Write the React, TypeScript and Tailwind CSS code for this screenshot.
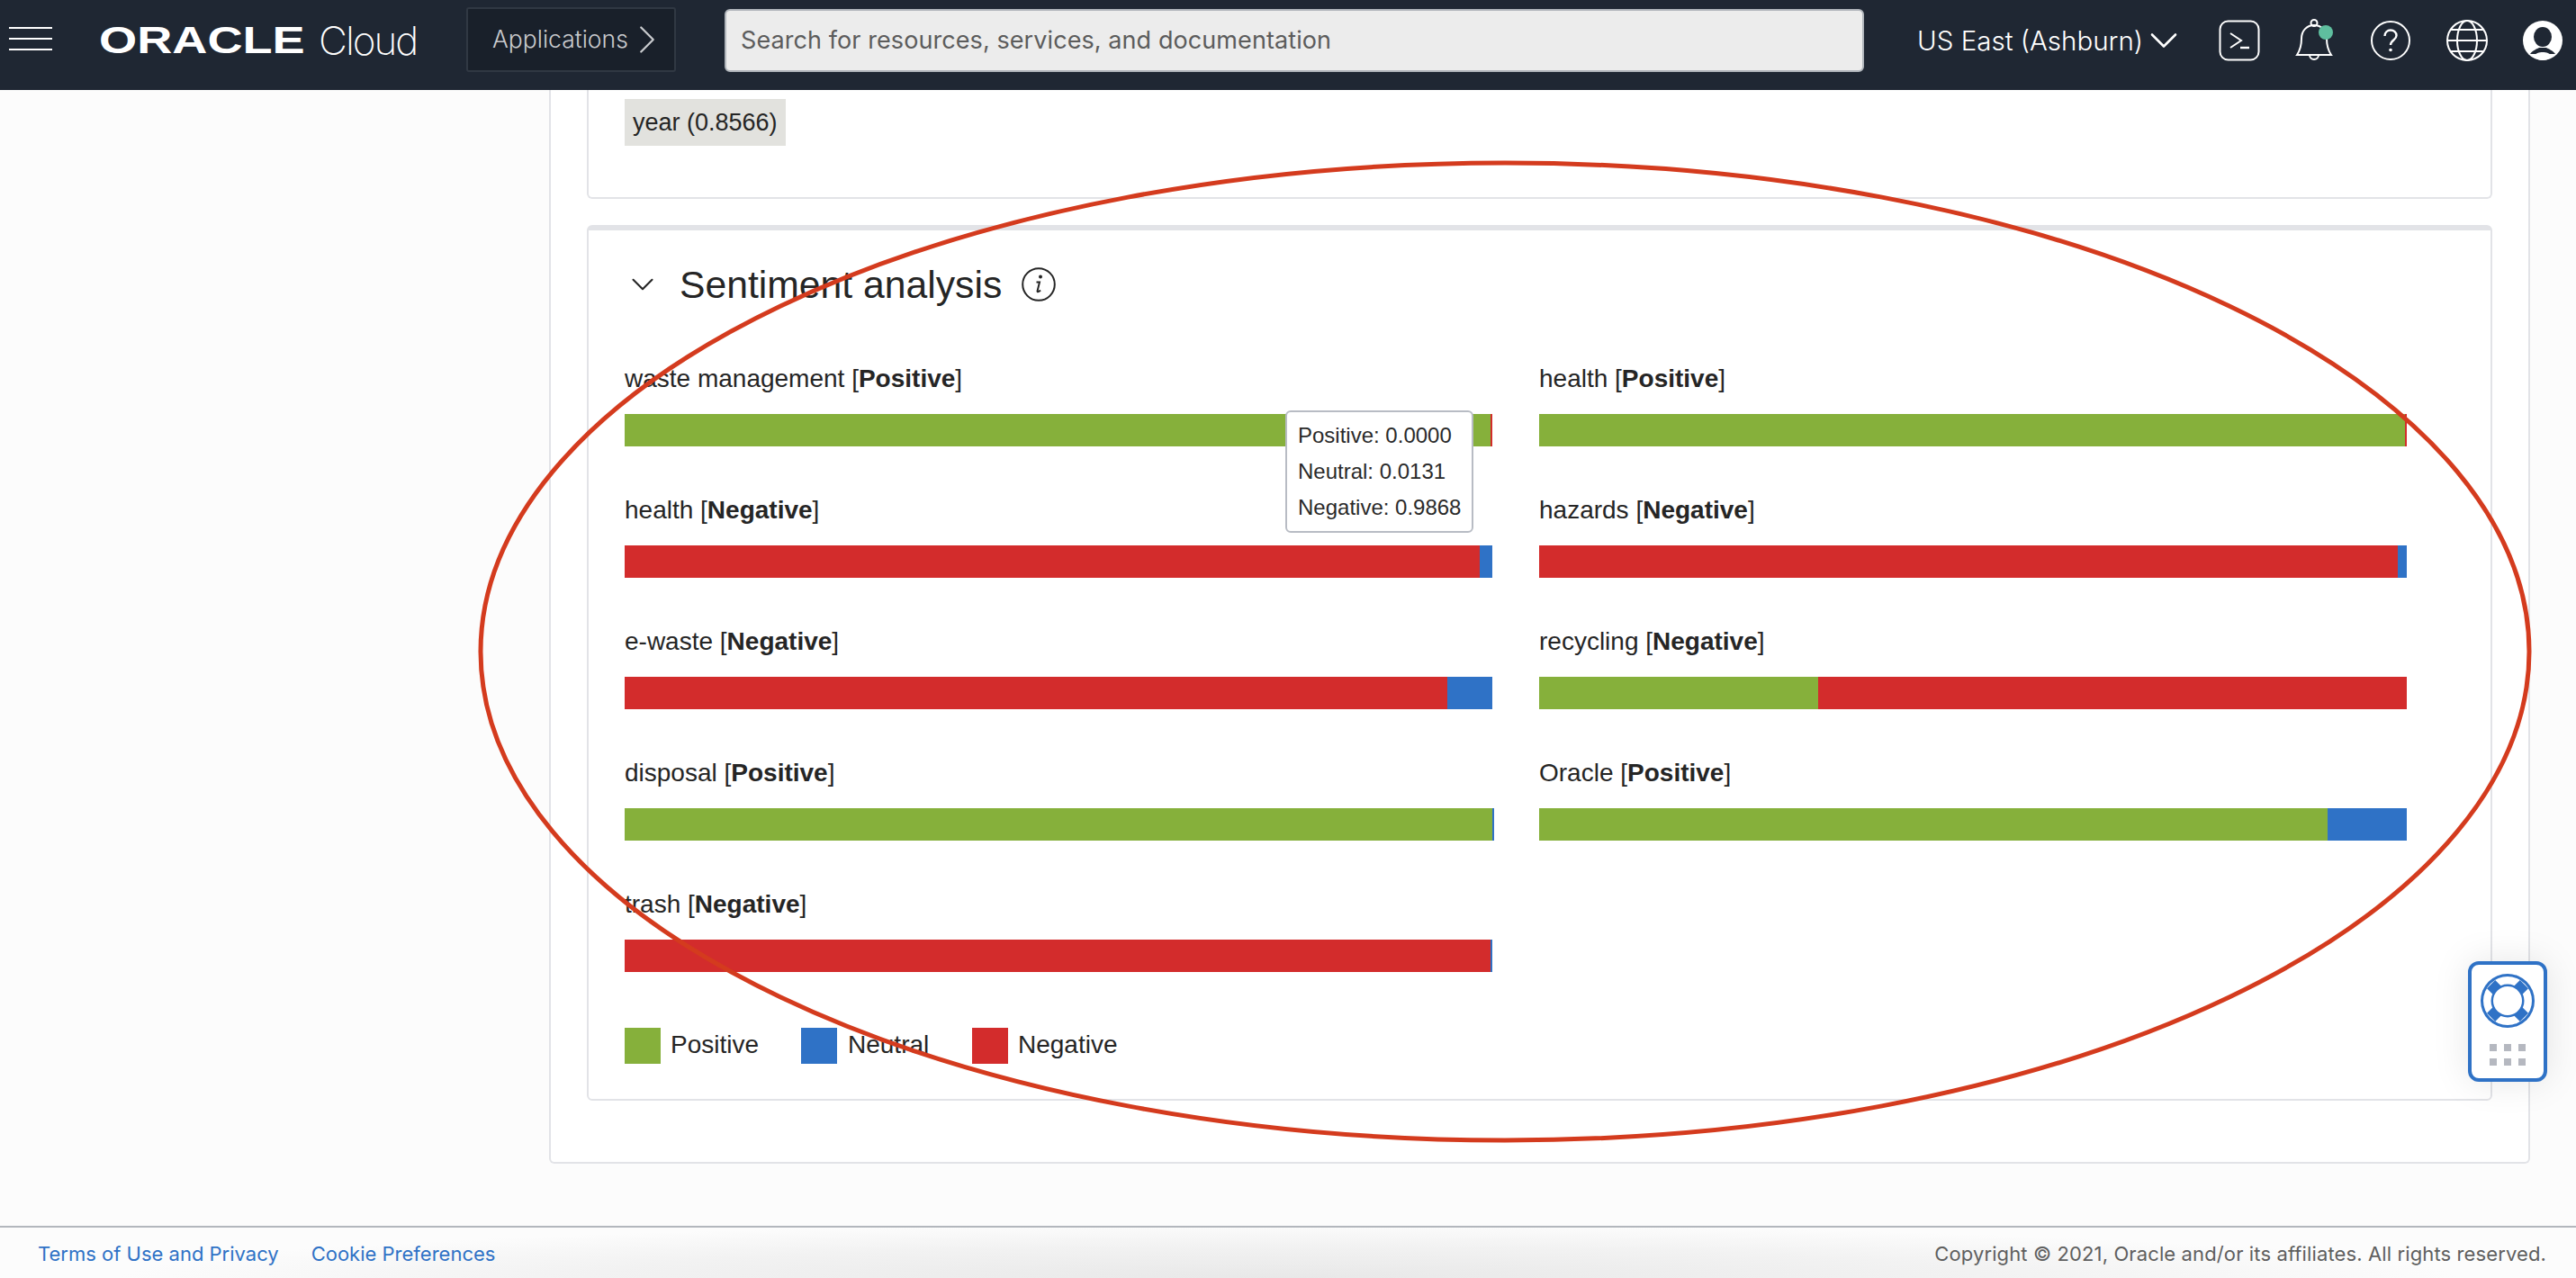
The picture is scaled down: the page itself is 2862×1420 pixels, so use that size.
import React from 'react';
import { ChevronDown, ChevronRight } from 'lucide-react';

const GREEN = '#86b03b';
const BLUE = '#2f72c6';
const RED = '#d32c2c';

type Seg = { color: string; width: number };
type Row = { term: string; label: string; segs: Seg[] };

const leftRows: Row[] = [
  { term: 'waste management', label: 'Positive', segs: [{ color: GREEN, width: 962 }, { color: RED, width: 2 }] },
  { term: 'health', label: 'Negative', segs: [{ color: RED, width: 950 }, { color: BLUE, width: 14 }] },
  { term: 'e-waste', label: 'Negative', segs: [{ color: RED, width: 914 }, { color: BLUE, width: 50 }] },
  { term: 'disposal', label: 'Positive', segs: [{ color: GREEN, width: 964 }, { color: BLUE, width: 2 }] },
  { term: 'trash', label: 'Negative', segs: [{ color: RED, width: 962 }, { color: BLUE, width: 2 }] },
];

const rightRows: Row[] = [
  { term: 'health', label: 'Positive', segs: [{ color: GREEN, width: 962 }, { color: RED, width: 2 }] },
  { term: 'hazards', label: 'Negative', segs: [{ color: RED, width: 954 }, { color: BLUE, width: 10 }] },
  { term: 'recycling', label: 'Negative', segs: [{ color: GREEN, width: 310 }, { color: RED, width: 654 }] },
  { term: 'Oracle', label: 'Positive', segs: [{ color: GREEN, width: 876 }, { color: BLUE, width: 88 }] },
];

function SentimentRow({ row, tooltip }: { row: Row; tooltip?: boolean }) {
  return (
    <div className="w-[964px]">
      <div className="h-[40px] mb-[19px] text-[28px] leading-[40px] text-[#252525] whitespace-nowrap">
        {row.term} [<b>{row.label}</b>]
      </div>
      <div className="relative flex h-[36px]">
        {row.segs.map((seg, i) => (
          <div key={i} className="h-full shrink-0" style={{ width: seg.width, backgroundColor: seg.color }} />
        ))}
        {tooltip && (
          <div className="absolute left-[734px] top-[-4px] w-[209px] h-[136px] bg-white border-2 border-[#b8bcc4] rounded-[6px] pl-[12px] pt-[6px] text-[24px] leading-[40px] text-[#2a2a2a]">
            <div>Positive: 0.0000</div>
            <div>Neutral: 0.0131</div>
            <div>Negative: 0.9868</div>
          </div>
        )}
      </div>
    </div>
  );
}

function TerminalIcon() {
  return (
    <svg width="46" height="46" viewBox="0 0 46 46" fill="none" stroke="white" className="shrink-0">
      <rect x="1.5" y="1.5" width="43" height="43" rx="9" strokeWidth="2" />
      <path d="M13 15l12 8-12 8" strokeWidth="2" />
      <path d="M24 31h10" strokeWidth="2.4" />
    </svg>
  );
}

function BellIcon() {
  return (
    <svg width="44" height="48" viewBox="0 0 44 48" fill="none" stroke="white" strokeWidth="2" className="shrink-0">
      <circle cx="21" cy="4.5" r="3.5" />
      <path d="M2 40c4-6 5-11 5-18C7 13 13 7 21 7s14 6 14 15c0 7 1 12 5 18z" />
      <path d="M16 40a5 5 0 0 0 10 0" />
      <circle cx="34" cy="15" r="8" fill="#5fbf9f" stroke="none" />
    </svg>
  );
}

function HelpIcon() {
  return (
    <svg width="46" height="46" viewBox="0 0 46 46" fill="none" stroke="white" className="shrink-0">
      <circle cx="23" cy="23" r="21" strokeWidth="2" />
      <path d="M16.500 18c0-4 3-6.500 6.500-6.500s6.500 2.500 6.500 6c0 5-6.500 5-6.500 10.500" strokeWidth="2.400" />
      <circle cx="23" cy="33.500" r="1.800" fill="white" stroke="none" />
    </svg>
  );
}

function GlobeIcon() {
  return (
    <svg width="46" height="46" viewBox="0 0 46 46" fill="none" stroke="white" strokeWidth="2" className="shrink-0">
      <circle cx="23" cy="23" r="22" />
      <ellipse cx="23" cy="23" rx="11" ry="22" />
      <path d="M1 23h44M5 11h36M5 35h36" />
    </svg>
  );
}

function AvatarIcon() {
  return (
    <svg width="44" height="44" viewBox="0 0 44 44" className="shrink-0">
      <circle cx="22" cy="22" r="22" fill="white" />
      <ellipse cx="22" cy="18" rx="10" ry="11" fill="#1f2733" />
      <path d="M8 37c3-4 8-6 10-7h8c2 1 7 3 10 7" fill="#1f2733" />
      <path d="M11 40c3-4 7-5 11-5s8 1 11 5c-3 2-7 4-11 4s-8-2-11-4z" fill="white" />
    </svg>
  );
}

function LifeBuoy() {
  return (
    <svg width="60" height="60" viewBox="0 0 60 60" className="shrink-0">
      <circle cx="30" cy="30" r="30" fill={BLUE} />
      <circle cx="30" cy="30" r="27" fill="white" />
      <path d="M11.600 11.600L48.400 48.400M48.400 11.600L11.600 48.400" stroke={BLUE} strokeWidth="13" />
      <circle cx="30" cy="30" r="18.500" fill={BLUE} />
      <circle cx="30" cy="30" r="16" fill="white" />
    </svg>
  );
}

export default function App() {
  return (
    <div className="relative flex flex-col h-screen overflow-hidden bg-[#fcfcfc] font-['Liberation_Sans',Arial,sans-serif]">
      <header className="flex items-center h-[100px] pb-[10px] shrink-0 bg-[#1f2733] text-white">
        <div className="ml-[10px] mb-[4px] w-[48px] flex flex-col gap-[10px]">
          <div className="h-[2px] bg-white" />
          <div className="h-[2px] bg-white" />
          <div className="h-[2px] bg-white" />
        </div>
        <div className="ml-[52px] w-[232px] text-[42px] leading-none font-bold origin-left scale-x-[1.29] whitespace-nowrap">
          ORACLE
        </div>
        <div className="ml-[12px] w-[108px] text-[44px] leading-none font-['Inter',sans-serif] font-extralight tracking-[-2px]">
          Cloud
        </div>
        <button className="ml-[56px] w-[233px] h-[72px] mb-[2px] flex items-center pl-[27px] bg-[#19202a] border-2 border-[#303843] rounded-[3px] text-[26.500px] text-[#c9cbce] font-['Inter',sans-serif] font-light">
          Applications
          <ChevronRight size={54} strokeWidth={1} className="ml-[-6px] shrink-0" />
        </button>
        <div className="ml-[54px] w-[1266px] h-[70px] flex items-center pl-[16px] bg-[#ececec] border-2 border-[#b0b5bb] rounded-[6px] text-[27px] tracking-[0.08px] text-[#5c5c5c] font-['Inter',sans-serif]">
          Search for resources, services, and documentation
        </div>
        <div className="ml-[59px] w-[249px] text-[29.500px] font-['Inter',sans-serif] font-light whitespace-nowrap">
          US East (Ashburn)
        </div>
        <ChevronDown size={52} strokeWidth={1.2} className="ml-[-1px] shrink-0" />
        <div className="ml-[35px] flex items-center gap-[39px]">
          <TerminalIcon />
          <BellIcon />
          <HelpIcon />
          <GlobeIcon />
          <AvatarIcon />
        </div>
      </header>

      <main className="flex-1 pl-[610px] pr-[51px] min-h-0">
        <div className="bg-white border-x-2 border-b-2 border-[#e2e3e7] rounded-b-[6px] px-[40px] pb-[68px]">
          <div className="h-[121px] border-x-2 border-b-2 border-[#e2e3e7] rounded-b-[6px] pl-[40px] pt-[10px]">
            <span className="inline-block h-[52px] px-[9px] bg-[#e2e2de] text-[27px] leading-[52px] text-[#252525]">
              year (0.8566)
            </span>
          </div>
          <div className="mt-[29px] h-[973px] border-x-2 border-b-2 border-t-[6px] border-[#e2e3e7] rounded-[6px] px-[40px] pt-[40px]">
            <div className="flex items-center h-[40px] mb-[65px]">
              <ChevronDown size={42} strokeWidth={1.2} className="ml-[-1px] text-[#252525]" />
              <h2 className="ml-[20px] text-[42.700px] font-normal leading-[40px] text-[#252525]">Sentiment analysis</h2>
              <svg width="38" height="38" viewBox="0 0 38 38" fill="none" className="ml-[22px]">
                <circle cx="19" cy="19" r="17.800" stroke="#252525" strokeWidth="2" />
                <circle cx="21" cy="10.500" r="2" fill="#252525" />
                <path d="M16.500 16.500h3.500l-2.500 10c0 1 1.500 1 3.500-1" stroke="#252525" strokeWidth="2" />
              </svg>
            </div>
            <div className="flex gap-x-[52px]">
              <div className="flex flex-col gap-y-[51px]">
                {leftRows.map((row, i) => (
                  <SentimentRow key={i} row={row} tooltip={i === 0} />
                ))}
              </div>
              <div className="flex flex-col gap-y-[51px]">
                {rightRows.map((row, i) => (
                  <SentimentRow key={i} row={row} />
                ))}
              </div>
            </div>
            <div className="flex items-center h-[40px] mt-[62px] text-[28px] text-[#252525]">
              <div className="w-[40px] h-[40px] bg-[#86b03b]" />
              <span className="ml-[11px] mb-[3px] w-[145px]">Positive</span>
              <div className="w-[40px] h-[40px] bg-[#2f72c6]" />
              <span className="ml-[12px] mb-[3px] w-[138px]">Neutral</span>
              <div className="w-[40px] h-[40px] bg-[#d32c2c]" />
              <span className="ml-[11px] mb-[3px]">Negative</span>
            </div>
          </div>
        </div>
      </main>

      <footer className="flex items-center h-[58px] shrink-0 pl-[42px] pr-[33px] pt-[2px] border-t-2 border-[#b3b7bd] text-[22px] font-['Inter',sans-serif] bg-[radial-gradient(ellipse_1300px_60px_at_50%_100%,#e8e8e8_0%,#f2f2f2_60%,#fcfcfc_100%)]">
        <a className="text-[#2f72c6]">Terms of Use and Privacy</a>
        <a className="ml-[36px] text-[#2f72c6]">Cookie Preferences</a>
        <span className="ml-auto tracking-[0.12px] text-[#5f5f5f]">Copyright © 2021, Oracle and/or its affiliates. All rights reserved.</span>
      </footer>

      {/* help widget floats over the page */}
      <div className="absolute left-[2742px] top-[1068px] w-[88px] h-[134px] flex flex-col items-center bg-white border-4 border-[#2f72c6] rounded-[12px] pt-[10px] shadow-[0_0_40px_rgba(0,0,0,0.1)]">
        <LifeBuoy />
        <div className="mt-[18px] grid grid-cols-3 gap-[8px]">
          {[0, 1, 2, 3, 4, 5].map((i) => (
            <div key={i} className="w-[8px] h-[8px] bg-[#b5b8c0]" />
          ))}
        </div>
      </div>

      {/* hand drawn annotation over the screenshot */}
      <svg width="2862" height="1420" viewBox="0 0 2862 1420" fill="none" className="absolute left-0 top-0 pointer-events-none">
        <ellipse cx="1672" cy="724" rx="1138" ry="543" stroke="#d43b1e" strokeWidth="5" />
      </svg>
    </div>
  );
}
